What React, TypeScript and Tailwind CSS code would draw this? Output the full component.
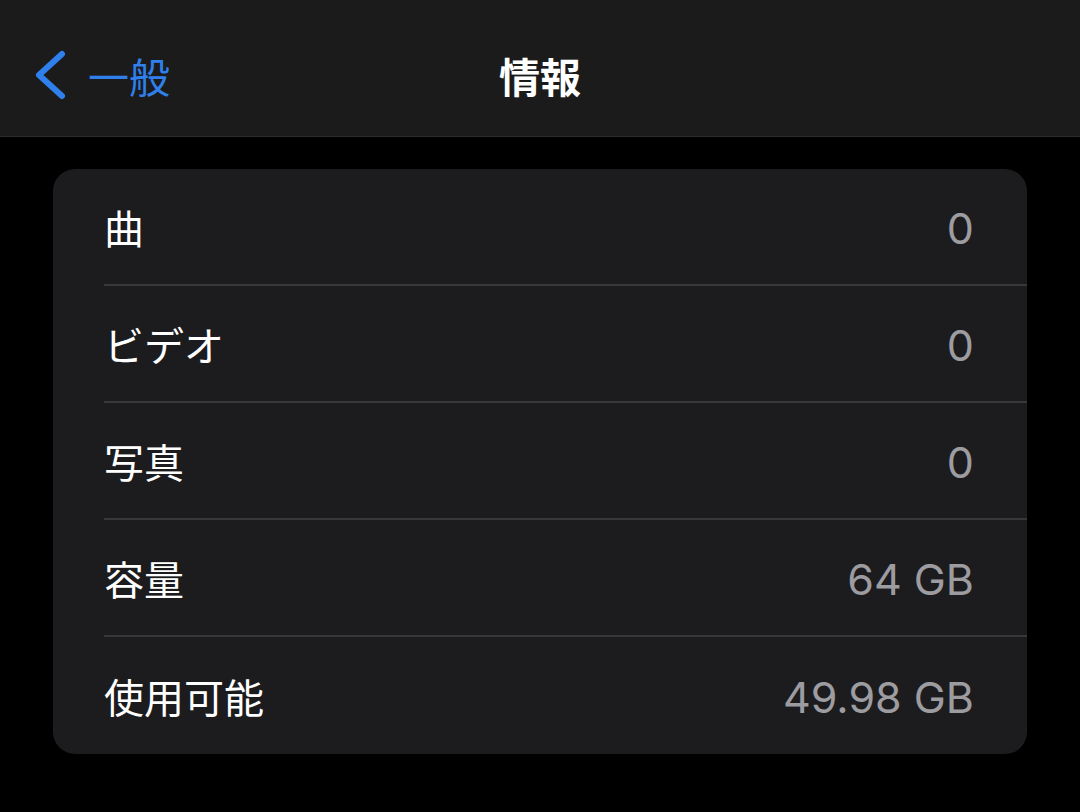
import React from 'react';

const rows = [
  { label: '曲', value: '0' },
  { label: 'ビデオ', value: '0' },
  { label: '写真', value: '0' },
  { label: '容量', value: '64 GB' },
  { label: '使用可能', value: '49.98 GB' },
];

const font = { fontFamily: '"Noto Sans CJK JP", "Noto Sans", sans-serif' };

export default function App() {
  return (
    <div className="min-h-screen w-[1080px] h-[812px] bg-black overflow-hidden" style={font}>
      {/* ナビゲーションバー */}
      <div className="relative h-[137px] bg-[#1b1b1c] border-b border-[#2c2c2e] flex items-center">
        <div className="flex items-center pl-[34px] pt-[14px] text-[#2f80ed]">
          <svg width="32" height="50" viewBox="0 0 32 50" fill="none">
            <path d="M28 4 L5 25 L28 46" stroke="#2f80ed" strokeWidth="6" strokeLinecap="round" strokeLinejoin="round" />
          </svg>
          <span className="ml-[22px] text-[41px] leading-none">一般</span>
        </div>
        <div className="absolute inset-0 flex items-center justify-center pt-[14px]">
          <span className="text-white text-[41px] font-bold leading-none">情報</span>
        </div>
      </div>

      {/* 情報リスト */}
      <div className="px-[53px] pt-[32px]">
        <div className="bg-[#1c1c1e] rounded-[22px] overflow-hidden">
          {rows.map((row, i) => (
            <div key={row.label} className="pl-[51px]">
              <div
                className={
                  'h-[117px] flex items-center justify-between pr-[53px] ' +
                  (i < rows.length - 1 ? 'border-b-2 border-[#38383a]' : '')
                }
              >
                <span className="text-white text-[40px] leading-none">{row.label}</span>
                <span
                  className="text-[#9c9ca1] text-[43px] leading-none pt-[4px]"
                  style={{ fontFamily: '"Inter", "Noto Sans", sans-serif' }}
                >
                  {row.value}
                </span>
              </div>
            </div>
          ))}
        </div>
      </div>
    </div>
  );
}
